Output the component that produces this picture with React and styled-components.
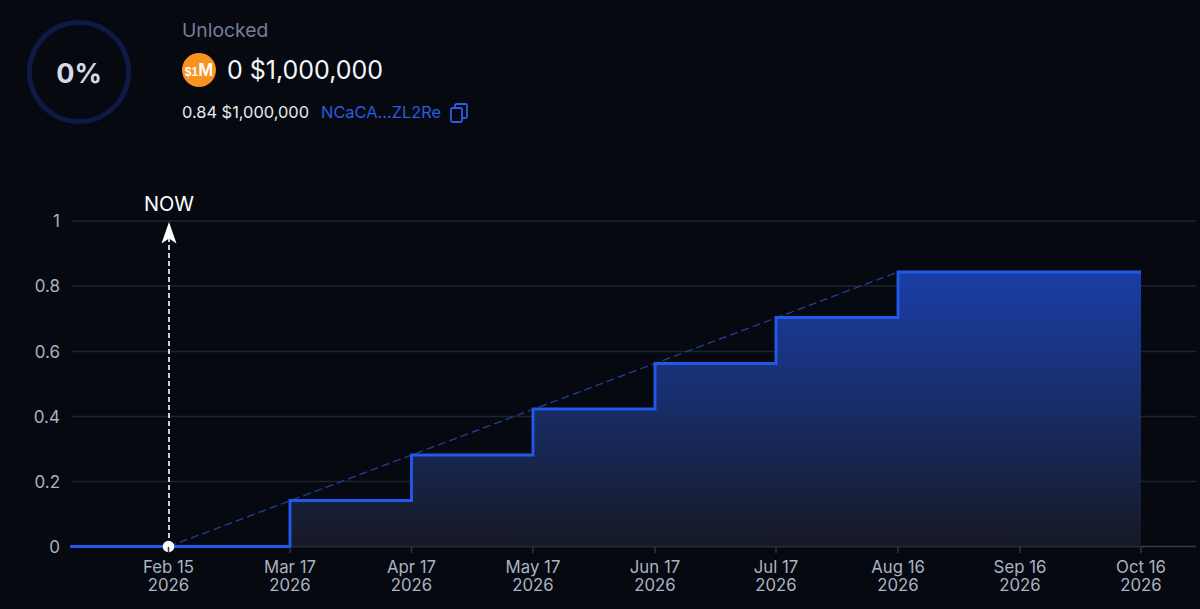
import React from 'react'
import styled, { createGlobalStyle } from 'styled-components'

const GlobalStyle = createGlobalStyle`
  html, body {
    margin: 0;
    padding: 0;
    background: #06090f;
  }
`

const yTicks = [
  { label: '1', y: 221 },
  { label: '0.8', y: 286 },
  { label: '0.6', y: 351.5 },
  { label: '0.4', y: 416.5 },
  { label: '0.2', y: 481.5 },
  { label: '0', y: 546.5 },
]

const xTicks = [
  { x: 168.5, label: 'Feb 15' },
  { x: 290, label: 'Mar 17' },
  { x: 411.5, label: 'Apr 17' },
  { x: 533, label: 'May 17' },
  { x: 655, label: 'Jun 17' },
  { x: 776, label: 'Jul 17' },
  { x: 898, label: 'Aug 16' },
  { x: 1020, label: 'Sep 16' },
  { x: 1141, label: 'Oct 16' },
]

const stepLine =
  'M70 546.5H290V500.5H411.5V455H533V409H655V363.5H776V317.5H898V272H1141'

function Chart() {
  return (
    <ChartSvg viewBox="0 0 1200 429" width="1200" height="429">
      <defs>
        <linearGradient id="area" gradientUnits="userSpaceOnUse" x1="0" y1="272" x2="0" y2="546">
          <stop offset="0" stopColor="#1a40ad" />
          <stop offset="1" stopColor="#171a26" />
        </linearGradient>
      </defs>
      <g transform="translate(0 -180)">
        {yTicks.map((t) => (
          <line key={t.label} x1="72" x2="1196" y1={t.y} y2={t.y} stroke={t.label === '0' ? '#3a3d46' : '#20242e'} strokeWidth="1.5" />
        ))}
        <path d={stepLine + 'V546.5H290Z'} fill="url(#area)" fillOpacity="0.96" />
        <line x1="168.5" y1="546.5" x2="898" y2="272" stroke="#1f4096" strokeWidth="1.3" strokeDasharray="8 4" />
        <path d={stepLine} fill="none" stroke="#2159ea" strokeWidth="2.9" />
        <line x1="169" y1="546" x2="169" y2="236" stroke="#fff" strokeWidth="1.6" strokeDasharray="5 3" />
        <path d="M169 222L176.5 243.5L169 238.5L161.5 243.5Z" fill="#fff" />
        <circle cx="168.5" cy="546.5" r="5.8" fill="#fff" />
        <AxisLabel x="169" y="211" textAnchor="middle" fill="#fff" fontSize="20">NOW</AxisLabel>
        {yTicks.map((t) => (
          <AxisLabel key={t.label} x="60" y={t.y + 6} textAnchor="end" fill="#a6b3c2" fontSize="17">
            {t.label}
          </AxisLabel>
        ))}
        {xTicks.map((t) => (
          <g key={t.x}>
            <line x1={t.x} x2={t.x} y1="547" y2="553" stroke="#33363f" strokeWidth="1.5" />
            <AxisLabel textAnchor="middle" fill="#a9b4c2" fontSize="16.8">
              <tspan x={t.x} y="573">{t.label}</tspan>
              <tspan x={t.x} y="591">2026</tspan>
            </AxisLabel>
          </g>
        ))}
      </g>
    </ChartSvg>
  )
}

export default function App() {
  return (
    <>
      <GlobalStyle />
      <Page>
        <Header>
          <Ring>0%</Ring>
          <Details>
            <Caption>Unlocked</Caption>
            <AmountRow>
              <Coin>
                <svg width="34" height="34" viewBox="0 0 34 34">
                  <circle cx="17" cy="17" r="17" fill="#f7931e" />
                  <CoinMark x="17" y="23" textAnchor="middle">
                    <tspan fontSize="12">$1</tspan>
                    <tspan fontSize="18">M</tspan>
                  </CoinMark>
                </svg>
              </Coin>
              <Amount>0 $1,000,000</Amount>
            </AmountRow>
            <MetaRow>
              <Total>0.84 $1,000,000</Total>
              <Address>NCaCA...ZL2Re</Address>
              <CopyIcon width="18" height="20" viewBox="0 0 18 20" fill="none" stroke="#2a5de0" strokeWidth="1.8">
                <rect x="1" y="5" width="11" height="14" rx="1.5" />
                <path d="M5 5V2.5A1.5 1.5 0 0 1 6.5 1H15.5A1.5 1.5 0 0 1 17 2.5V13.5A1.5 1.5 0 0 1 15.5 15H12" />
              </CopyIcon>
            </MetaRow>
          </Details>
        </Header>
        <Chart />
      </Page>
    </>
  )
}

const Page = styled.div`
  width: 1200px;
  height: 609px;
  overflow: hidden;
  background: #06090f;
  font-family: Inter, "Liberation Sans", sans-serif;
`

const Header = styled.header`
  display: flex;
  align-items: flex-start;
  height: 180px;
  box-sizing: border-box;
  padding: 20px 0 0 27px;
  gap: 51px;
`

const Ring = styled.div`
  width: 104px;
  height: 104px;
  box-sizing: border-box;
  border: 5px solid #0e1a45;
  border-radius: 50%;
  display: flex;
  align-items: center;
  justify-content: center;
  padding-top: 2px;
  color: #d5dbe6;
  font-size: 27px;
  font-weight: 700;
`

const Details = styled.div`
  display: flex;
  flex-direction: column;
`

const Caption = styled.div`
  color: #737e98;
  font-size: 19.3px;
  line-height: 20px;
`

const AmountRow = styled.div`
  display: flex;
  align-items: center;
  gap: 11px;
  margin-top: 13px;
`

const Coin = styled.span`
  display: flex;
  width: 34px;
  height: 34px;
`

const CoinMark = styled.text`
  fill: #fff;
  font-family: "Liberation Sans", sans-serif;
  font-weight: 700;
`

const Amount = styled.div`
  color: #f4f6fa;
  font-size: 25px;
  line-height: 34px;
`

const MetaRow = styled.div`
  display: flex;
  align-items: center;
  margin-top: 14px;
`

const Total = styled.span`
  color: #e8ebf0;
  font-size: 16.4px;
  line-height: 20px;
`

const Address = styled.span`
  color: #2a5de0;
  font-size: 16.4px;
  line-height: 20px;
  margin-left: 12px;
`

const CopyIcon = styled.svg`
  margin-left: 9px;
  margin-top: 2px;
`

const ChartSvg = styled.svg`
  display: block;
`

const AxisLabel = styled.text`
  font-family: Inter, "Liberation Sans", sans-serif;
`
